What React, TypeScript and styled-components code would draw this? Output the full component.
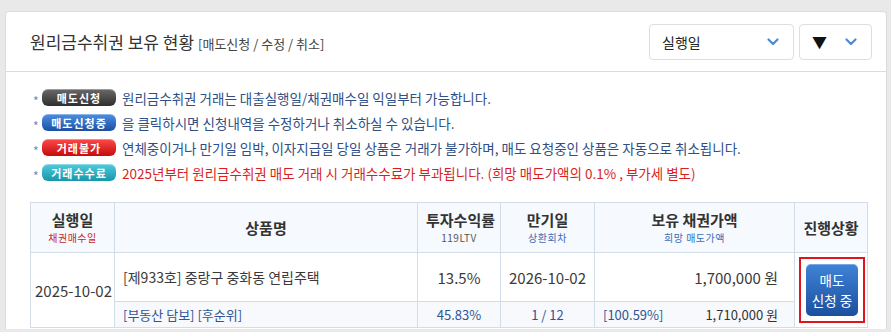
import React from 'react';
import styled, { createGlobalStyle } from 'styled-components';

const GlobalStyle = createGlobalStyle`
  body {
    margin: 0;
    background: #e9e9e9;
    font-family: 'Noto Sans CJK KR', 'Noto Sans', sans-serif;
    color: #333;
  }
`;

const Page = styled.div`
  padding: 11px 4px 0 5px;
  height: 332px;
  box-sizing: border-box;
  overflow: hidden;
`;

const Card = styled.div`
  background: #fff;
  border: 1px solid #dcdcdc;
  border-bottom: none;
  border-radius: 4px 4px 0 0;
  height: 318px;
  box-sizing: border-box;
`;

const Header = styled.div`
  height: 59px;
  display: flex;
  align-items: center;
  justify-content: space-between;
  padding: 0 14px 0 24px;
  border-bottom: 1px solid #dcdcdc;
`;

const Title = styled.h2`
  margin: 0;
  font-size: 17px;
  font-weight: 400;
  color: #333;

  small {
    font-size: 13px;
    color: #444;
    margin-left: 4px;
  }
`;

const Selects = styled.div`
  display: flex;
  gap: 5px;
`;

const SelectBox = styled.div<{ $width: number }>`
  width: ${p => p.$width}px;
  height: 36px;
  box-sizing: border-box;
  border: 1px solid #dedede;
  border-radius: 4px;
  display: flex;
  align-items: center;
  justify-content: space-between;
  padding: 0 14px 0 12px;
  font-size: 14px;
  color: #222;
`;

const Arrow = styled.span`
  font-size: 15px;
  color: #111;
`;

const Chevron = () => (
  <svg width="12" height="8" viewBox="0 0 12 8">
    <path d="M1.5 1.5 L6 6 L10.5 1.5" fill="none" stroke="#4a8ad8" strokeWidth="2.2" strokeLinecap="round" strokeLinejoin="round" />
  </svg>
);

const Body = styled.div`
  padding: 13px 19px 0 24px;
`;

const Notices = styled.ul`
  list-style: none;
  margin: 0 0 17px;
  padding: 0;
`;

const Notice = styled.li<{ $red?: boolean }>`
  height: 25px;
  display: flex;
  align-items: center;
  font-size: 13.5px;
  color: ${p => (p.$red ? '#d81f1f' : '#2f4f86')};
  white-space: nowrap;
`;

const Star = styled.span`
  width: 12px;
  padding: 5px 0 0 3px;
  box-sizing: border-box;
  color: #6b8bbb;
  font-size: 12px;
`;

const badgeColors = {
  dark: ['#6a6a6a', '#2e2e2e'],
  blue: ['#4d8fe0', '#1b4fa6'],
  red: ['#ff4a4a', '#c50b0b'],
  teal: ['#4fcbdc', '#1896aa'],
};

const Badge = styled.span<{ $tone: keyof typeof badgeColors }>`
  width: 74px;
  height: 17px;
  margin-right: 6px;
  border-radius: 6px;
  display: inline-flex;
  align-items: center;
  justify-content: center;
  font-size: 11px;
  font-weight: 700;
  letter-spacing: 1px;
  color: #fff;
  background: linear-gradient(${p => badgeColors[p.$tone][0]}, ${p => badgeColors[p.$tone][1]});
  box-shadow: inset 0 1px 0 rgba(255, 255, 255, 0.35);
  flex-shrink: 0;
`;

const Table = styled.table`
  width: 837px;
  border-collapse: collapse;
  table-layout: fixed;
  font-size: 14px;
  color: #333;

  td, th {
    border: 1px solid #d3dde9;
    padding: 0 8px;
    white-space: nowrap;
  }
`;

const HeadCell = styled.th`
  height: 49px;
  background: #f6f9fd;
  font-weight: 700;
  font-size: 15px;
  color: #333;
  line-height: 20px;
  text-align: center;
`;

const SubLabel = styled.div<{ $color: string }>`
  font-size: 10px;
  font-weight: 400;
  line-height: 16px;
  color: ${p => p.$color};
  letter-spacing: 0.5px;
`;

const Cell = styled.td<{ $align?: string; $small?: boolean }>`
  height: 48px;
  text-align: ${p => p.$align || 'center'};
  font-size: ${p => (p.$small ? 14 : 15)}px;
  color: #3a3a3a;
  && {
    padding: 0 ${p => (p.$small ? 8 : 4)}px;
  }
`;

const SubCell = styled.td<{ $align?: string }>`
  height: 25px;
  background: #f7f9fc;
  text-align: ${p => p.$align || 'center'};
  font-size: 13px;
  color: #2f5595;
`;

const Split = styled.div`
  display: flex;
  justify-content: space-between;
  padding-right: 8px;
`;

const Amount = styled.span<{ $large?: boolean }>`
  color: ${p => (p.$large ? '#3a3a3a' : '#333')};
  font-size: ${p => (p.$large ? 15 : 13)}px;
`;

const Highlight = styled.div`
  border: 2px solid #e0141e;
  padding: 5px;
  width: 52px;
  margin: 0 auto;
`;

const StatusButton = styled.button`
  width: 52px;
  height: 52px;
  border: none;
  border-radius: 5px;
  background: linear-gradient(#3f83d6, #1c4f9e);
  color: #fff;
  font-family: inherit;
  font-size: 13.5px;
  line-height: 20px;
  padding: 0;
  box-shadow: inset 0 1px 0 rgba(255, 255, 255, 0.3);
`;

const App: React.FC = () => {
  return (
    <Page>
      <GlobalStyle />
      <Card>
        <Header>
          <Title>
            원리금수취권 보유 현황<small>[매도신청 / 수정 / 취소]</small>
          </Title>
          <Selects>
            <SelectBox $width={145}>
              실행일
              <Chevron />
            </SelectBox>
            <SelectBox $width={73}>
              <Arrow>▼</Arrow>
              <Chevron />
            </SelectBox>
          </Selects>
        </Header>

        <Body>
          <Notices>
            <Notice>
              <Star>*</Star>
              <Badge $tone="dark">매도신청</Badge>
              원리금수취권 거래는 대출실행일/채권매수일 익일부터 가능합니다.
            </Notice>
            <Notice>
              <Star>*</Star>
              <Badge $tone="blue">매도신청중</Badge>
              을 클릭하시면 신청내역을 수정하거나 취소하실 수 있습니다.
            </Notice>
            <Notice>
              <Star>*</Star>
              <Badge $tone="red">거래불가</Badge>
              연체중이거나 만기일 임박, 이자지급일 당일 상품은 거래가 불가하며, 매도 요청중인 상품은 자동으로 취소됩니다.
            </Notice>
            <Notice $red>
              <Star>*</Star>
              <Badge $tone="teal">거래수수료</Badge>
              2025년부터 원리금수취권 매도 거래 시 거래수수료가 부과됩니다. (희망 매도가액의 0.1% , 부가세 별도)
            </Notice>
          </Notices>

          <Table>
            <colgroup>
              <col style={{ width: 84 }} />
              <col style={{ width: 303 }} />
              <col style={{ width: 83 }} />
              <col style={{ width: 94 }} />
              <col style={{ width: 200 }} />
              <col style={{ width: 73 }} />
            </colgroup>
            <thead>
              <tr>
                <HeadCell>
                  실행일
                  <SubLabel $color="#c8252c">채권매수일</SubLabel>
                </HeadCell>
                <HeadCell>상품명</HeadCell>
                <HeadCell>
                  투자수익률
                  <SubLabel $color="#555">119LTV</SubLabel>
                </HeadCell>
                <HeadCell>
                  만기일
                  <SubLabel $color="#3a6db5">상환회차</SubLabel>
                </HeadCell>
                <HeadCell>
                  보유 채권가액
                  <SubLabel $color="#3a6db5">희망 매도가액</SubLabel>
                </HeadCell>
                <HeadCell>진행상황</HeadCell>
              </tr>
            </thead>
            <tbody>
              <tr>
                <Cell rowSpan={2}>2025-10-02</Cell>
                <Cell $align="left" $small>[제933호] 중랑구 중화동 연립주택</Cell>
                <Cell>13.5%</Cell>
                <Cell>2026-10-02</Cell>
                <Cell $small>
                  <Split>
                    <span />
                    <Amount $large>1,700,000 원</Amount>
                  </Split>
                </Cell>
                <Cell rowSpan={2}>
                  <Highlight>
                    <StatusButton>
                      매도
                      <br />
                      신청 중
                    </StatusButton>
                  </Highlight>
                </Cell>
              </tr>
              <tr>
                <SubCell $align="left">[부동산 담보] [후순위]</SubCell>
                <SubCell>45.83%</SubCell>
                <SubCell>1 / 12</SubCell>
                <SubCell $align="left">
                  <Split>
                    <span>[100.59%]</span>
                    <Amount>1,710,000 원</Amount>
                  </Split>
                </SubCell>
              </tr>
            </tbody>
          </Table>
        </Body>
      </Card>
    </Page>
  );
};

export default App;
